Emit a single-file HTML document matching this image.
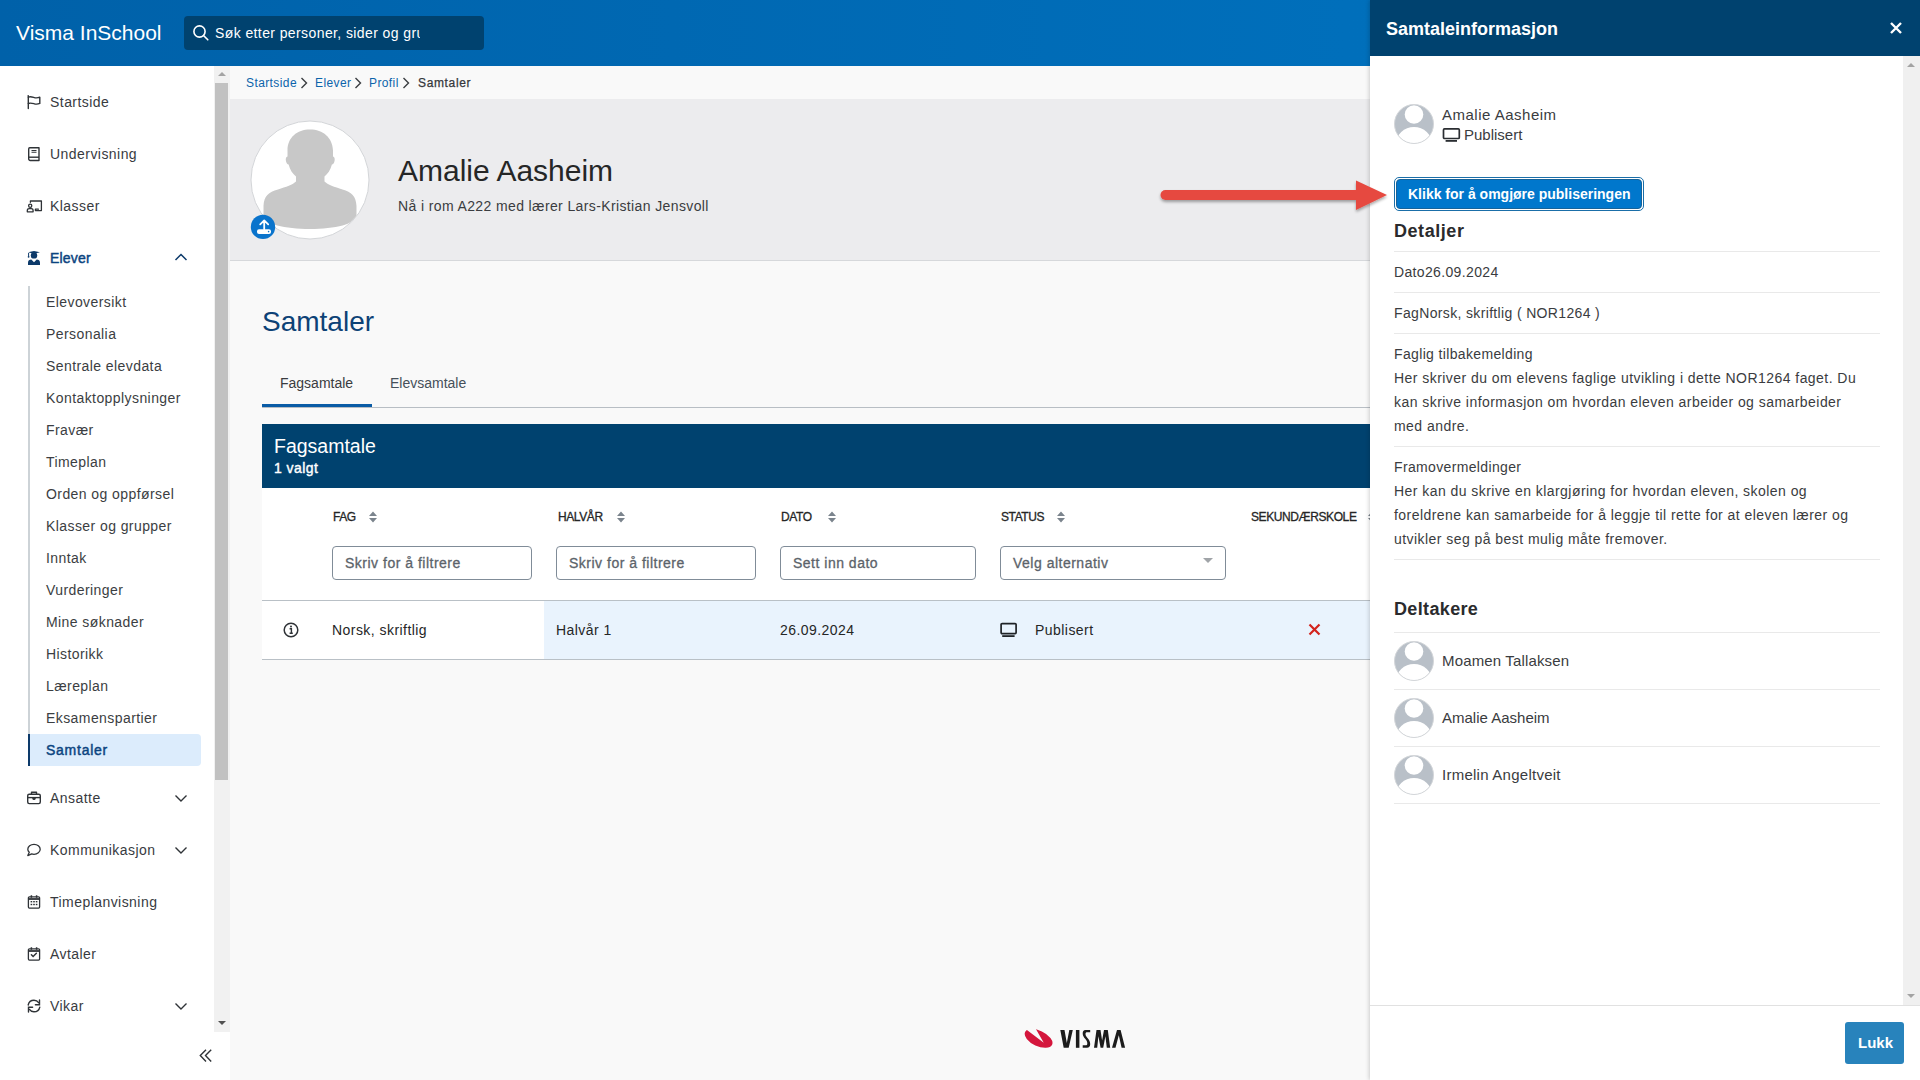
<!DOCTYPE html>
<html><head><meta charset="utf-8">
<style>
*{box-sizing:border-box;margin:0;padding:0}
html,body{width:1920px;height:1080px;overflow:hidden;font-family:"Liberation Sans",sans-serif;background:#f9f9f9;color:#252626}
.a{position:absolute;white-space:nowrap}
#hdr{left:0;top:0;width:1920px;height:66px;background:linear-gradient(90deg,#0061a9 0%,#006fbb 70%,#0072be 100%)}
#title{left:16px;top:21px;font-size:21px;line-height:24px;color:#fff}
#search{left:184px;top:16px;width:300px;height:34px;background:#00426f;border-radius:4px}
#search .txt{left:31px;top:9px;width:205px;overflow:hidden;font-size:14px;line-height:16px;color:#fff;letter-spacing:0.4px}
#side{left:0;top:66px;width:214px;height:1014px;background:#fff}
.nav{left:50px;font-size:14px;line-height:16px;color:#383b3f;letter-spacing:0.45px}
.sub{left:46px;font-size:14px;line-height:16px;color:#3b3e42;letter-spacing:0.42px}
.ico{position:absolute;left:26px}
.chev{position:absolute;left:174px}
#sbar{left:214px;top:66px;width:16px;height:966px;background:#f1f1f1}
#sthumb{left:215px;top:83px;width:13px;height:697px;background:#c1c1c1}
#main{left:230px;top:66px;width:1690px;height:1014px;background:#f9f9f9}
.crumb{top:75px;font-size:12px;line-height:16px;color:#0c64ab;letter-spacing:0.4px}
#band{left:230px;top:99px;width:1140px;height:162px;background:#ececee;border-bottom:1px solid #d6d8db}
#drawer{left:1370px;top:0;width:550px;height:1080px;background:#fff;box-shadow:-1px 0 4px rgba(0,0,0,.18)}
#dhdr{left:0;top:0;width:550px;height:56px;background:#00426f}
.th{font-size:12px;line-height:14px;font-weight:normal;-webkit-text-stroke:0.3px #252626;color:#252626;top:510px;letter-spacing:-0.4px}
.inp{position:absolute;top:546px;height:34px;border:1px solid #808c98;border-radius:4px;background:#fff}
.inp span{position:absolute;left:12px;top:8px;font-size:14px;line-height:16px;color:#5c636a;white-space:nowrap;letter-spacing:0.5px;-webkit-text-stroke:0.3px #5c636a}
.td{top:622px;font-size:14px;line-height:16px;color:#252626;letter-spacing:0.45px}
.dt{left:24px;font-size:14px;line-height:16px;color:#3a3c40;letter-spacing:0.35px}
.sep{position:absolute;left:24px;width:486px;height:1px;background:#e9e9e9}
</style></head><body>
<div id="hdr" class="a"></div>
<div id="title" class="a">Visma InSchool</div>
<div id="search" class="a">
  <svg class="a" style="left:8px;top:8px" width="18" height="18" viewBox="0 0 18 18"><circle cx="7.5" cy="7.5" r="5.6" fill="none" stroke="#fff" stroke-width="1.6"/><path d="M11.5 11.5l4.3 4.3" stroke="#fff" stroke-width="1.6" stroke-linecap="round"/></svg>
  <div class="txt a">Søk etter personer, sider og grupper</div>
</div>

<div id="side" class="a"></div>
<!-- top nav -->
<svg class="ico" style="top:94px" width="16" height="16" viewBox="0 0 16 16" fill="none" stroke="#2f3337" stroke-width="1.4" stroke-linecap="round" stroke-linejoin="round"><path d="M2.3 1.6v13"/><path d="M2.3 3.2c2-1 4-.2 6 .4 1.8.5 3.5.4 5.5-.4v6.2c-2 .9-3.7 1-5.5.4-2-.6-4-1.3-6-.3"/></svg>
<div class="a nav" style="top:94px">Startside</div>
<svg class="ico" style="top:146px" width="16" height="16" viewBox="0 0 16 16" fill="none" stroke="#2f3337" stroke-width="1.4" stroke-linejoin="round"><path d="M3.6 1.7h9.4v12.8H4.2c-.8 0-1.5-.6-1.5-1.4V3c0-.7.5-1.3 1-1.3z"/><path d="M2.8 11.2H13"/><path d="M5.5 4.5h5M5.5 6.3h5" stroke-width="1.1"/></svg>
<div class="a nav" style="top:146px">Undervisning</div>
<svg class="ico" style="top:198px" width="18" height="16" viewBox="0 0 18 16" fill="none" stroke="#2f3337" stroke-width="1.3" stroke-linejoin="round" stroke-linecap="round"><path d="M4.4 4.3V3h11v9.6H9.4v-1.4h3"/><circle cx="4.2" cy="7.8" r="1.6"/><path d="M1.3 13.8v-1.3c0-1.2.8-1.8 2-1.8h1.8c1.2 0 2 .6 2 1.8v1.3z"/></svg>
<div class="a nav" style="top:198px">Klasser</div>
<svg class="ico" style="top:250px" width="16" height="16" viewBox="0 0 16 16" fill="#0d3a6a"><path d="M2 2.3L8 .9l6 1.4-6 1.5z"/><circle cx="8" cy="5.4" r="3.2"/><path d="M2.6 3v3.6" stroke="#0d3a6a" stroke-width="1"/><circle cx="2.6" cy="6.8" r="0.9"/><path d="M2 15v-2.3c0-1.9 1.4-3.1 3.3-3.1L8 12.2l2.7-2.6c1.9 0 3.3 1.2 3.3 3.1V15z"/></svg>
<div class="a nav" style="top:250px;color:#0b4480;letter-spacing:0.2px;-webkit-text-stroke:0.45px #0b4480">Elever</div>
<svg class="chev" style="top:250px" width="14" height="14" viewBox="0 0 14 14" fill="none" stroke="#0d3a6a" stroke-width="1.5"><path d="M1.5 10l5.5-5.5 5.5 5.5"/></svg>
<!-- sub nav -->
<div class="a" style="left:28px;top:286px;width:2px;height:480px;background:#cdd3d7"></div>
<div class="a" style="left:28px;top:734px;width:173px;height:32px;background:#dcecfc;border-left:2px solid #0d3a6a;border-radius:0 4px 4px 0"></div>
<div class="a sub" style="top:294px">Elevoversikt</div>
<div class="a sub" style="top:326px">Personalia</div>
<div class="a sub" style="top:358px">Sentrale elevdata</div>
<div class="a sub" style="top:390px">Kontaktopplysninger</div>
<div class="a sub" style="top:422px">Fravær</div>
<div class="a sub" style="top:454px">Timeplan</div>
<div class="a sub" style="top:486px">Orden og oppførsel</div>
<div class="a sub" style="top:518px">Klasser og grupper</div>
<div class="a sub" style="top:550px">Inntak</div>
<div class="a sub" style="top:582px">Vurderinger</div>
<div class="a sub" style="top:614px">Mine søknader</div>
<div class="a sub" style="top:646px">Historikk</div>
<div class="a sub" style="top:678px">Læreplan</div>
<div class="a sub" style="top:710px">Eksamenspartier</div>
<div class="a sub" style="top:742px;color:#0b4480;letter-spacing:0.75px;-webkit-text-stroke:0.45px #0b4480">Samtaler</div>
<!-- bottom nav -->
<svg class="ico" style="top:790px" width="16" height="16" viewBox="0 0 16 16" fill="none" stroke="#2f3337" stroke-width="1.4" stroke-linejoin="round"><path d="M5.5 4.2V2.3h5v1.9"/><rect x="1.7" y="4.2" width="12.6" height="9.4" rx="1.5"/><path d="M1.7 7.6h12.6"/><path d="M6.8 7.8c.2 1.2.6 1.6 1.2 1.6s1-.4 1.2-1.6" fill="#2f3337"/></svg>
<div class="a nav" style="top:790px">Ansatte</div>
<svg class="chev" style="top:791px" width="14" height="14" viewBox="0 0 14 14" fill="none" stroke="#2f3337" stroke-width="1.4"><path d="M1.5 4.5l5.5 5.5 5.5-5.5"/></svg>
<svg class="ico" style="top:842px" width="16" height="16" viewBox="0 0 16 16" fill="none" stroke="#2f3337" stroke-width="1.3" stroke-linejoin="round"><path d="M3.3 10.3C2.3 9.5 1.8 8.5 1.8 7.3c0-2.8 2.8-5 6.2-5s6.2 2.2 6.2 5-2.8 5-6.2 5c-.8 0-1.6-.1-2.3-.4L1.8 13.6z"/></svg>
<div class="a nav" style="top:842px">Kommunikasjon</div>
<svg class="chev" style="top:843px" width="14" height="14" viewBox="0 0 14 14" fill="none" stroke="#2f3337" stroke-width="1.4"><path d="M1.5 4.5l5.5 5.5 5.5-5.5"/></svg>
<svg class="ico" style="top:894px" width="16" height="16" viewBox="0 0 16 16" fill="none" stroke="#2f3337" stroke-width="1.3"><rect x="2.4" y="2.8" width="11.2" height="11.3" rx="1"/><path d="M2.4 5h11.2" stroke-width="1.8"/><path d="M5.4 1.2v2.6M10.6 1.2v2.6" stroke-width="1.5"/><g fill="#2f3337" stroke="none"><rect x="4.6" y="7" width="1.6" height="1.4"/><rect x="7.2" y="7" width="1.6" height="1.4"/><rect x="9.8" y="7" width="1.6" height="1.4"/><rect x="4.6" y="9.8" width="1.6" height="1.4"/><rect x="7.2" y="9.8" width="1.6" height="1.4"/><rect x="9.8" y="9.8" width="1.6" height="1.4"/></g></svg>
<div class="a nav" style="top:894px">Timeplanvisning</div>
<svg class="ico" style="top:946px" width="16" height="16" viewBox="0 0 16 16" fill="none" stroke="#2f3337" stroke-width="1.3"><rect x="2.4" y="2.8" width="11.2" height="11.3" rx="1"/><path d="M2.4 5h11.2" stroke-width="1.8"/><path d="M5.4 1.2v2.6M10.6 1.2v2.6" stroke-width="1.5"/><path d="M5.4 8.8l1.7 1.7 3.3-3.3" stroke-width="1.5" stroke-linecap="round"/></svg>
<div class="a nav" style="top:946px">Avtaler</div>
<svg class="ico" style="top:998px" width="16" height="16" viewBox="0 0 16 16" fill="none" stroke="#2f3337" stroke-width="1.4" stroke-linecap="round"><path d="M2.2 7C2.8 4.2 5 2.3 8 2.3c2 0 3.6.9 4.6 2.4"/><path d="M13.5 1.9v4.8H9.4"/><path d="M13.8 9.1c-.6 2.8-2.8 4.7-5.8 4.7-2 0-3.6-.9-4.6-2.4"/><path d="M2.5 14.1V9.3h4.1"/></svg>
<div class="a nav" style="top:998px">Vikar</div>
<svg class="chev" style="top:999px" width="14" height="14" viewBox="0 0 14 14" fill="none" stroke="#2f3337" stroke-width="1.4"><path d="M1.5 4.5l5.5 5.5 5.5-5.5"/></svg>
<!-- sidebar scrollbar -->
<div id="sbar" class="a"></div>
<div id="sthumb" class="a"></div>
<svg class="a" style="left:217px;top:70px" width="10" height="8" viewBox="0 0 10 8"><path d="M1 6h8L5 2z" fill="#a3a3a3"/></svg>
<svg class="a" style="left:217px;top:1019px" width="10" height="8" viewBox="0 0 10 8"><path d="M1 2h8L5 6z" fill="#505050"/></svg>
<div class="a" style="left:0;top:1032px;width:230px;height:48px;background:#fff"></div>
<svg class="a" style="left:198px;top:1048px" width="16" height="16" viewBox="0 0 16 16" fill="none" stroke="#2f3337" stroke-width="1.4"><path d="M8 1.8L2.3 7.6 8 13.4M13.2 1.8L7.5 7.6l5.7 5.8"/></svg>

<!-- main -->
<div id="main" class="a"></div>
<div class="a crumb" style="left:246px">Startside</div>
<div class="a crumb" style="left:315px">Elever</div>
<div class="a crumb" style="left:369px">Profil</div>
<div class="a crumb" style="left:418px;color:#34373b;-webkit-text-stroke:0.25px #34373b;letter-spacing:0.65px">Samtaler</div>
<svg class="a" style="left:299px;top:76px" width="10" height="14" viewBox="0 0 10 14" fill="none" stroke="#3a3d40" stroke-width="1.4"><path d="M2.5 2l5 5-5 5"/></svg>
<svg class="a" style="left:353px;top:76px" width="10" height="14" viewBox="0 0 10 14" fill="none" stroke="#3a3d40" stroke-width="1.4"><path d="M2.5 2l5 5-5 5"/></svg>
<svg class="a" style="left:401px;top:76px" width="10" height="14" viewBox="0 0 10 14" fill="none" stroke="#3a3d40" stroke-width="1.4"><path d="M2.5 2l5 5-5 5"/></svg>

<div id="band" class="a"></div>
<svg class="a" style="left:250px;top:120px" width="122" height="122" viewBox="0 0 122 122">
  <defs><clipPath id="cc"><circle cx="60" cy="60" r="58.5"/></clipPath></defs>
  <circle cx="60" cy="60" r="59" fill="#fff" stroke="#d3d5d8" stroke-width="1"/>
  <g clip-path="url(#cc)" fill="#c8c8c8">
    <path d="M60 9.5c-13 0-22.5 8-22.5 21v6c-1.5.5-2 2-1.6 4.3.4 2.2 1.5 3.6 2.7 3.7 1.3 5.5 4.3 9.5 7.4 12v5c-3 3-10 5.5-18 8C18.5 72 14 76 13.5 86v9c0 9 21.5 14 46.5 14s46.5-5 46.5-14v-9c-.5-10-5-14-14-16.5-8-2.5-15-5-18-8v-5c3.1-2.5 6.1-6.5 7.4-12 1.2-.1 2.3-1.5 2.7-3.7.4-2.3-.1-3.8-1.6-4.3v-6C82.5 17.5 73 9.5 60 9.5z"/>
  </g>
</svg>
<svg class="a" style="left:250px;top:214px" width="26" height="26" viewBox="0 0 26 26"><circle cx="13" cy="12.9" r="12.2" fill="#0a74cc"/><path d="M14.2 15.2V6.6M10.2 10.4l4-4 4 4" stroke="#fff" stroke-width="1.8" fill="none" stroke-linecap="round" stroke-linejoin="round"/><rect x="7" y="15.3" width="14" height="4.6" rx="2" fill="#fff"/><circle cx="18.6" cy="17.6" r="0.8" fill="#0a74cc"/></svg>
<div class="a" style="left:398px;top:155px;font-size:30px;line-height:32px;color:#252626">Amalie Aasheim</div>
<div class="a" style="left:398px;top:198px;font-size:14px;line-height:16px;color:#3a3c40;letter-spacing:0.38px">Nå i rom A222 med lærer Lars-Kristian Jensvoll</div>

<div class="a" style="left:262px;top:306px;font-size:28px;line-height:32px;color:#0d4276">Samtaler</div>
<div class="a" style="left:280px;top:375px;font-size:14px;line-height:16px;color:#3a3c40">Fagsamtale</div>
<div class="a" style="left:390px;top:375px;font-size:14px;line-height:16px;color:#46505a">Elevsamtale</div>
<div class="a" style="left:262px;top:407px;width:1108px;height:1px;background:#b8bec4"></div>
<div class="a" style="left:262px;top:404px;width:110px;height:3px;background:#0a5ca6"></div>

<div class="a" style="left:262px;top:424px;width:1108px;height:64px;background:#00426f"></div>
<div class="a" style="left:274px;top:435px;font-size:19.5px;line-height:22px;color:#fff">Fagsamtale</div>
<div class="a" style="left:274px;top:460px;font-size:14px;line-height:16px;color:#fff;letter-spacing:0.45px;-webkit-text-stroke:0.4px #fff">1 valgt</div>
<div class="a" style="left:262px;top:488px;width:1108px;height:172px;background:#fff"></div>
<div class="a th" style="left:333px">FAG</div>
<div class="a th" style="left:558px">HALVÅR</div>
<div class="a th" style="left:781px">DATO</div>
<div class="a th" style="left:1001px">STATUS</div>
<div class="a th" style="left:1251px">SEKUNDÆRSKOLE</div>
<svg class="a" style="left:368px;top:510px" width="10" height="14" viewBox="0 0 10 14" fill="#7b848d"><path d="M1 6h8L5 1.5zM1 8h8l-4 4.5z"/></svg>
<svg class="a" style="left:616px;top:510px" width="10" height="14" viewBox="0 0 10 14" fill="#7b848d"><path d="M1 6h8L5 1.5zM1 8h8l-4 4.5z"/></svg>
<svg class="a" style="left:827px;top:510px" width="10" height="14" viewBox="0 0 10 14" fill="#7b848d"><path d="M1 6h8L5 1.5zM1 8h8l-4 4.5z"/></svg>
<svg class="a" style="left:1056px;top:510px" width="10" height="14" viewBox="0 0 10 14" fill="#7b848d"><path d="M1 6h8L5 1.5zM1 8h8l-4 4.5z"/></svg>
<svg class="a" style="left:1367px;top:510px" width="10" height="14" viewBox="0 0 10 14" fill="#7b848d"><path d="M1 6h8L5 1.5zM1 8h8l-4 4.5z"/></svg>
<div class="inp" style="left:332px;width:200px"><span>Skriv for å filtrere</span></div>
<div class="inp" style="left:556px;width:200px"><span>Skriv for å filtrere</span></div>
<div class="inp" style="left:780px;width:196px"><span>Sett inn dato</span></div>
<div class="inp" style="left:1000px;width:226px"><span>Velg alternativ</span><svg style="position:absolute;left:201px;top:10px" width="12" height="8" viewBox="0 0 12 8"><path d="M1 1h10L6 6z" fill="#a0a4a8"/></svg></div>
<div class="a" style="left:262px;top:600px;width:1108px;height:1px;background:#b9c0c6"></div>
<div class="a" style="left:544px;top:601px;width:826px;height:58px;background:#e9f3fd"></div>
<div class="a" style="left:262px;top:659px;width:1108px;height:1px;background:#b9c0c6"></div>
<svg class="a" style="left:282px;top:621px" width="18" height="18" viewBox="0 0 18 18"><circle cx="9" cy="9" r="6.8" fill="none" stroke="#2f3337" stroke-width="1.5"/><circle cx="9" cy="5.6" r="1" fill="#2f3337"/><path d="M7.6 7.8H9.4v4.4M7.6 12.3h3.2" stroke="#2f3337" stroke-width="1.4" fill="none"/></svg>
<div class="a td" style="left:332px">Norsk, skriftlig</div>
<div class="a td" style="left:556px">Halvår 1</div>
<div class="a td" style="left:780px">26.09.2024</div>
<svg class="a" style="left:999px;top:621px" width="20" height="18" viewBox="0 0 20 18" fill="none" stroke="#1f2226" stroke-width="1.7"><rect x="2.1" y="2.6" width="15" height="10" rx="1"/><path d="M3.2 15.1h12.4" stroke-width="1.8"/></svg>
<div class="a td" style="left:1035px">Publisert</div>
<svg class="a" style="left:1308px;top:623px" width="13" height="13" viewBox="0 0 13 13" stroke="#d3231d" stroke-width="2.2"><path d="M1.5 1.5l10 10M11.5 1.5l-10 10"/></svg>

<!-- visma logo -->
<svg class="a" style="left:1022px;top:1026px" width="108" height="26" viewBox="0 0 108 26">
  <ellipse cx="16.6" cy="12.4" rx="14.9" ry="7.7" transform="rotate(25 16.6 12.4)" fill="#d4163c"/>
  <path d="M-2 -1.3V-3H12L11.6 -1 21.75 16.8z" fill="#f9f9f9"/>
  <g fill="#1c1c1c">
  <path d="M38.3 4h4.2l2.3 13 2.5-13h3.5l-4.1 17.8h-5z"/>
  <rect x="53.9" y="4" width="3.5" height="17.8"/>
  <path d="M68.2 4h-4.7c-2 0-2.8 1.5-2.8 3.5 0 2 1 3.6 2.7 5.6 1.4 1.8 1.9 2.8 1.9 4.3 0 1.4-.6 1.9-1.8 1.9h-2.8v2.5h4.3c2 0 3.2-1.3 3.2-3.8 0-2.5-1.2-4.2-2.7-6-1.5-1.7-2-2.8-2-4 0-1.2.5-1.7 1.5-1.7h3.2z"/>
  <path d="M72 21.8L74.5 4h4l1.6 10.5L82 4h3.8l2.4 17.8h-3.4l-1.4-11.5-2.2 11.5h-2.6l-2.2-11.5-1.2 11.5z"/>
  <path d="M90 21.8L95 4h3.6l4.5 17.8h-3.5l-2.8-12.5-3.3 12.5z"/>
  </g>
</svg>

<!-- drawer -->
<div id="drawer" class="a">
  <div id="dhdr" class="a"></div>
  <div class="a" style="left:16px;top:18px;font-size:18px;line-height:22px;font-weight:bold;color:#fff">Samtaleinformasjon</div>
  <svg class="a" style="left:519px;top:21px" width="14" height="14" viewBox="0 0 14 14" stroke="#fff" stroke-width="2.4"><path d="M2 2l10 10M12 2L2 12"/></svg>
  <div class="a" style="left:533px;top:56px;width:17px;height:949px;background:#f0f0f0"></div>
  <svg class="a" style="left:536px;top:61px" width="10" height="8" viewBox="0 0 10 8"><path d="M1 6h8L5 2z" fill="#a3a3a3"/></svg>
  <svg class="a" style="left:536px;top:992px" width="10" height="8" viewBox="0 0 10 8"><path d="M1 2h8L5 6z" fill="#a3a3a3"/></svg>

  <svg class="a" style="left:24px;top:104px" width="40" height="40" viewBox="0 0 40 40"><defs><clipPath id="av1"><circle cx="20" cy="20" r="19.5"/></clipPath></defs><circle cx="20" cy="20" r="19.5" fill="#b9c0c8"/><g clip-path="url(#av1)" fill="#fff"><circle cx="20" cy="10.5" r="9.3"/><ellipse cx="20" cy="40" rx="18" ry="17"/></g><circle cx="20" cy="20" r="19.5" fill="none" stroke="#d3d6d9" stroke-width="1"/></svg>
  <div class="a" style="left:72px;top:106px;font-size:15px;line-height:17px;color:#3a3c40;letter-spacing:0.5px">Amalie Aasheim</div>
  <svg class="a" style="left:72px;top:127px" width="20" height="16" viewBox="0 0 20 16" fill="none" stroke="#2a2d31" stroke-width="1.7"><rect x="1.5" y="1.9" width="15.8" height="9.6" rx="1"/><path d="M3.6 13.9h11.4" stroke-width="1.8"/></svg>
  <div class="a" style="left:94px;top:126px;font-size:15px;line-height:17px;color:#3a3c40">Publisert</div>

  <div class="a" style="left:24px;top:177px;width:250px;height:34px;border:1px solid #1a6ea8;border-radius:5px"></div>
  <div class="a" style="left:26px;top:179px;width:246px;height:30px;background:#0077cc;border:1px solid #16639a;border-radius:4px"></div>
  <div class="a" style="left:38px;top:186px;font-size:14px;line-height:16px;font-weight:bold;color:#fff">Klikk for å omgjøre publiseringen</div>

  <div class="a" style="left:24px;top:221px;font-size:18px;line-height:20px;font-weight:bold;color:#2a2b2d;letter-spacing:0.55px">Detaljer</div>
  <div class="sep" style="top:251px"></div>
  <div class="a dt" style="top:264px">Dato26.09.2024</div>
  <div class="sep" style="top:292px"></div>
  <div class="a dt" style="top:305px">FagNorsk, skriftlig ( NOR1264 )</div>
  <div class="sep" style="top:333px"></div>
  <div class="a dt" style="top:346px">Faglig tilbakemelding</div>
  <div class="a dt" style="top:370px;line-height:24px;white-space:nowrap;letter-spacing:0.45px;top:366px">Her skriver du om elevens faglige utvikling i dette NOR1264 faget. Du<br>kan skrive informasjon om hvordan eleven arbeider og samarbeider<br>med andre.</div>
  <div class="sep" style="top:446px"></div>
  <div class="a dt" style="top:459px">Framovermeldinger</div>
  <div class="a dt" style="line-height:24px;white-space:nowrap;letter-spacing:0.45px;top:479px">Her kan du skrive en klargjøring for hvordan eleven, skolen og<br>foreldrene kan samarbeide for å leggje til rette for at eleven lærer og<br>utvikler seg på best mulig måte fremover.</div>
  <div class="sep" style="top:559px"></div>

  <div class="a" style="left:24px;top:599px;font-size:18px;line-height:20px;font-weight:bold;color:#2a2b2d;letter-spacing:0.35px">Deltakere</div>
  <div class="sep" style="top:632px"></div>
  <svg class="a" style="left:24px;top:641px" width="40" height="40" viewBox="0 0 40 40"><defs><clipPath id="av2"><circle cx="20" cy="20" r="19.5"/></clipPath></defs><circle cx="20" cy="20" r="19.5" fill="#b9c0c8"/><g clip-path="url(#av2)" fill="#fff"><circle cx="20" cy="10.5" r="9.3"/><ellipse cx="20" cy="40" rx="18" ry="17"/></g><circle cx="20" cy="20" r="19.5" fill="none" stroke="#d3d6d9" stroke-width="1"/></svg>
  <div class="a" style="left:72px;top:652px;font-size:15px;line-height:17px;color:#3a3c40;letter-spacing:0.15px">Moamen Tallaksen</div>
  <div class="sep" style="top:689px"></div>
  <svg class="a" style="left:24px;top:698px" width="40" height="40" viewBox="0 0 40 40"><defs><clipPath id="av3"><circle cx="20" cy="20" r="19.5"/></clipPath></defs><circle cx="20" cy="20" r="19.5" fill="#b9c0c8"/><g clip-path="url(#av3)" fill="#fff"><circle cx="20" cy="10.5" r="9.3"/><ellipse cx="20" cy="40" rx="18" ry="17"/></g><circle cx="20" cy="20" r="19.5" fill="none" stroke="#d3d6d9" stroke-width="1"/></svg>
  <div class="a" style="left:72px;top:709px;font-size:15px;line-height:17px;color:#3a3c40">Amalie Aasheim</div>
  <div class="sep" style="top:746px"></div>
  <svg class="a" style="left:24px;top:755px" width="40" height="40" viewBox="0 0 40 40"><defs><clipPath id="av4"><circle cx="20" cy="20" r="19.5"/></clipPath></defs><circle cx="20" cy="20" r="19.5" fill="#b9c0c8"/><g clip-path="url(#av4)" fill="#fff"><circle cx="20" cy="10.5" r="9.3"/><ellipse cx="20" cy="40" rx="18" ry="17"/></g><circle cx="20" cy="20" r="19.5" fill="none" stroke="#d3d6d9" stroke-width="1"/></svg>
  <div class="a" style="left:72px;top:766px;font-size:15px;line-height:17px;color:#3a3c40;letter-spacing:0.25px">Irmelin Angeltveit</div>
  <div class="sep" style="top:803px"></div>

  <div class="a" style="left:0;top:1005px;width:550px;height:1px;background:#e1e1e1"></div>
  <div class="a" style="left:475px;top:1022px;width:59px;height:42px;background:#2883bc;border-radius:3px"></div>
  <div class="a" style="left:488px;top:1034px;font-size:15px;line-height:18px;font-weight:bold;color:#fff">Lukk</div>
</div>
<!-- red arrow -->
<svg class="a" style="left:1155px;top:176px" width="236" height="40" viewBox="0 0 236 40">
  <defs><filter id="sh" x="-5%" y="-30%" width="110%" height="160%"><feGaussianBlur in="SourceAlpha" stdDeviation="1.5"/><feOffset dy="2" result="b"/><feComponentTransfer><feFuncA type="linear" slope="0.35"/></feComponentTransfer><feMerge><feMergeNode/><feMergeNode in="SourceGraphic"/></feMerge></filter></defs>
  <g filter="url(#sh)" fill="#e64a41"><path d="M10.5 14h192v10h-192a5 5 0 0 1 0-10z"/><path d="M201 4.5l31 14.5-31 15z"/></g>
</svg>

</body></html>
